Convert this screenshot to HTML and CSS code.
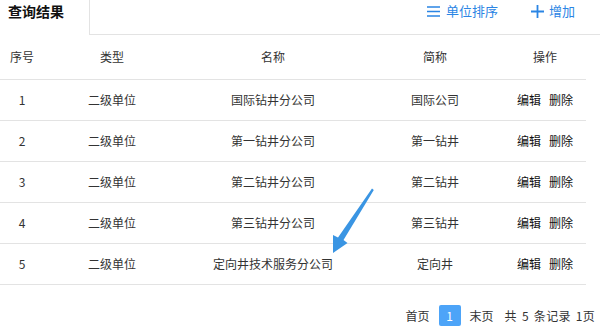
FILE: index.html
```html
<!DOCTYPE html>
<html lang="zh-CN">
<head>
<meta charset="utf-8">
<title>查询结果</title>
<link rel="stylesheet" href="styles.css">
</head>
<body>
<div class="page">
  <div class="tabbar">
    <div class="tab">查询结果</div>
    <div class="tabrest">
      <a class="action sort">
        <svg width="13" height="11" viewBox="0 0 13 11"><path d="M0 1h13M0 5.5h13M0 10h13" stroke="#2b85e4" stroke-width="1.6"/></svg>
        <span>单位排序</span>
      </a>
      <a class="action add">
        <svg width="13" height="13" viewBox="0 0 13 13"><path d="M0 6.5h13M6.5 0v13" stroke="#2b85e4" stroke-width="1.8"/></svg>
        <span>增加</span>
      </a>
    </div>
  </div>
  <table class="grid">
    <colgroup>
      <col class="c1"><col class="c2"><col class="c3"><col class="c4"><col class="c5">
    </colgroup>
    <thead>
      <tr><th>序号</th><th>类型</th><th>名称</th><th>简称</th><th>操作</th></tr>
    </thead>
    <tbody>
      <tr><td>1</td><td>二级单位</td><td>国际钻井分公司</td><td>国际公司</td><td class="ops"><a>编辑</a><a>删除</a></td></tr>
      <tr><td>2</td><td>二级单位</td><td>第一钻井分公司</td><td>第一钻井</td><td class="ops"><a>编辑</a><a>删除</a></td></tr>
      <tr><td>3</td><td>二级单位</td><td>第二钻井分公司</td><td>第二钻井</td><td class="ops"><a>编辑</a><a>删除</a></td></tr>
      <tr><td>4</td><td>二级单位</td><td>第三钻井分公司</td><td>第三钻井</td><td class="ops"><a>编辑</a><a>删除</a></td></tr>
      <tr><td>5</td><td>二级单位</td><td>定向井技术服务分公司</td><td>定向井</td><td class="ops"><a>编辑</a><a>删除</a></td></tr>
    </tbody>
  </table>
  <div class="pager">
    <span>首页</span>
    <span class="cur">1</span>
    <span>末页</span>
    <span class="total">共 5 条记录 1页</span>
  </div>
  <svg class="arrow" width="60" height="80" viewBox="0 0 60 80">
    <path d="M50 8.5 L51.8 10 L21.5 60 L25.5 63 L11 73 L11 55 L16 57.5 Z" fill="#3a95e3"/>
  </svg>
</div>
</body>
</html>
```
FILE: styles.css
```css
* { box-sizing: border-box; }
html, body { margin: 0; padding: 0; background: #fff; }
body {
  font-family: "Noto Sans CJK SC", "Noto Sans", sans-serif;
  font-size: 12px;
  color: #333;
}
.page { position: relative; width: 600px; height: 329px; overflow: hidden; }
.tabbar { display: flex; height: 35px; }
.tab {
  width: 90px;
  border-right: 1px solid #e3e3e3;
  padding: 1px 0 0 8px;
  font-size: 14px;
  font-weight: bold;
  color: #111;
  line-height: 20px;
}
.tabrest {
  flex: 1;
  border-bottom: 1px solid #e3e3e3;
  display: flex;
  justify-content: flex-end;
  align-items: flex-start;
  padding: 1px 25px 0 0;
  gap: 33px;
}
.action {
  display: flex;
  align-items: center;
  gap: 6px;
  color: #2b85e4;
  font-size: 13px;
  line-height: 20px;
}
.action.add { gap: 5px; }
.grid {
  width: 586px;
  border-collapse: collapse;
  table-layout: fixed;
}
.c1 { width: 44px; }
.c2 { width: 136px; }
.c3 { width: 186px; }
.c4 { width: 138px; }
.c5 { width: 82px; }
.grid th, .grid td {
  text-align: center;
  font-weight: normal;
  border-bottom: 1px solid #e3e3e3;
  padding: 0;
  color: #333;
}
.grid th { height: 44px; padding-bottom: 1px; }
.grid td { height: 41px; }
.ops a { color: #111; }
.ops a + a { margin-left: 8px; }
.pager {
  display: flex;
  justify-content: flex-end;
  align-items: center;
  padding: 20px 5px 0 0;
  gap: 8px;
  color: #333;
}
.pager .cur {
  width: 22px;
  height: 21px;
  background: #4da4f8;
  color: #fff;
  border-radius: 2px;
  display: flex;
  align-items: center;
  justify-content: center;
  margin: 0 1px;
}
.pager .total { margin-left: 3px; word-spacing: 2px; letter-spacing: 0.3px; }
.arrow { position: absolute; left: 322px; top: 180px; }
```
